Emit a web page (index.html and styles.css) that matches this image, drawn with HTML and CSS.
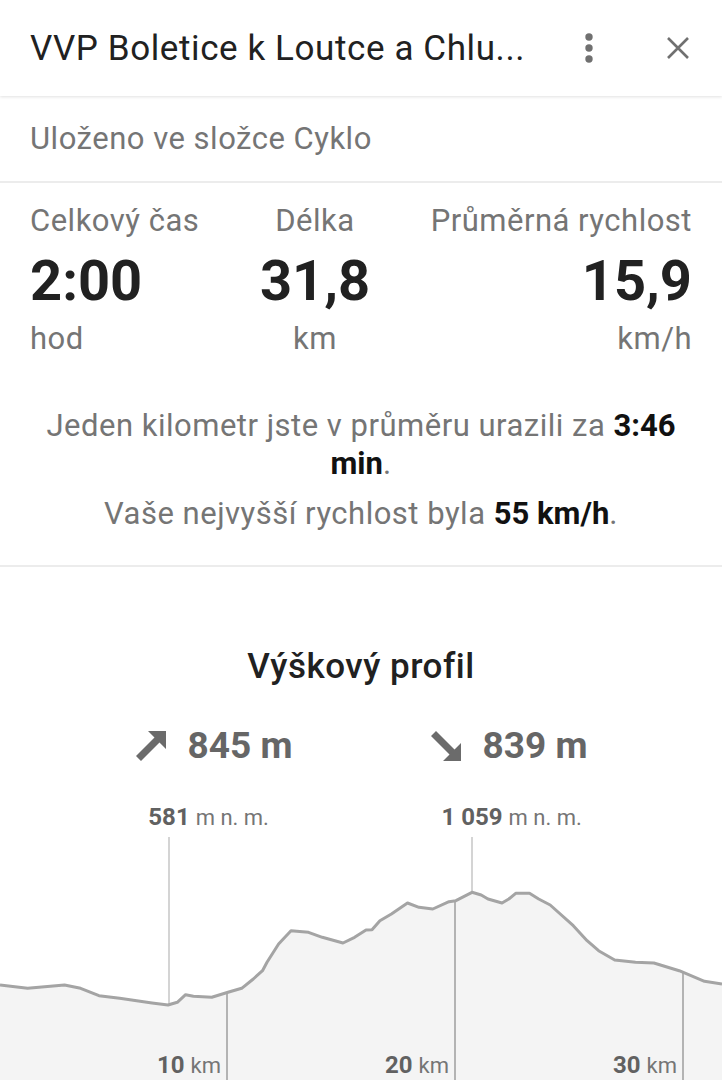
FILE: index.html
```html
<!DOCTYPE html>
<html lang="cs">
<head>
  <meta charset="UTF-8">
  <meta name="viewport" content="width=device-width, initial-scale=1.0">
  <title>VVP Boletice k Loutce a Chlumu</title>
  <link rel="stylesheet" href="styles.css">
</head>
<body>
  <!-- Top Bar -->
  <header class="topbar">
    <h1 class="topbar-title">VVP Boletice k Loutce a Chlu...</h1>
    <button class="icon-btn more-btn" aria-label="Více">
      <svg width="12" height="30" viewBox="0 0 12 30">
        <circle cx="6" cy="4" r="3.7"/>
        <circle cx="6" cy="15" r="3.7"/>
        <circle cx="6" cy="26" r="3.7"/>
      </svg>
    </button>
    <button class="icon-btn close-btn" aria-label="Zavřít">
      <svg width="24" height="24" viewBox="0 0 24 24">
        <path d="M2 2 L22 22 M22 2 L2 22"/>
      </svg>
    </button>
  </header>

  <!-- Folder -->
  <div class="folder">Uloženo ve složce Cyklo</div>

  <!-- Stats -->
  <section class="stats">
    <div class="stats-row">
      <div class="stat stat-left">
        <div class="stat-label">Celkový čas</div>
        <div class="stat-value">2:00</div>
        <div class="stat-unit">hod</div>
      </div>
      <div class="stat stat-center">
        <div class="stat-label">Délka</div>
        <div class="stat-value">31,8</div>
        <div class="stat-unit">km</div>
      </div>
      <div class="stat stat-right">
        <div class="stat-label">Průměrná rychlost</div>
        <div class="stat-value">15,9</div>
        <div class="stat-unit">km/h</div>
      </div>
    </div>
    <p class="summary summary-first">Jeden kilometr jste v průměru urazili za <b>3:46 min</b>.</p>
    <p class="summary">Vaše nejvyšší rychlost byla <b>55 km/h</b>.</p>
  </section>

  <!-- Elevation Profile -->
  <section class="profile">
    <h2 class="profile-title">Výškový profil</h2>
    <div class="gain">
      <div class="gain-item">
        <svg class="gain-icon" width="32" height="32" viewBox="0 0 32 32">
          <polygon points="13,1 31,1 31,19 24.5,12.5 6,31 1,26 19.5,7.5"/>
        </svg>
        <span>845 m</span>
      </div>
      <div class="gain-item">
        <svg class="gain-icon" width="32" height="32" viewBox="0 0 32 32">
          <polygon points="13,31 31,31 31,13 24.5,19.5 6,1 1,6 19.5,24.5"/>
        </svg>
        <span>839 m</span>
      </div>
    </div>

    <div class="chart">
      <svg class="chart-svg" width="722" height="300" viewBox="0 0 722 300">
        <path class="chart-area" d="M0,196 L27.6,199.3 L64.5,196 L80.6,199.3 L99,206.7 L119.7,209.3 L152,214 L168,216 L177.3,213.3 L185.6,205.7 L193.4,207.3 L211.8,208.3 L228,203.3 L241.7,199.3 L253.3,190 L262.5,181.7 L267,173.3 L278.6,155 L291,141.7 L308.5,143.3 L322.3,148.3 L343,154 L354.6,148.3 L366,141 L372,140.7 L379.9,131.7 L391.4,125 L407.5,114 L419,118.3 L432.8,120 L449,112.7 L455.9,111.7 L472,103.3 L481.2,106 L488,110 L502,114 L508.8,110 L515.7,104.3 L529.5,104.3 L538.7,110 L550.2,116 L573.3,136.7 L587.1,151.7 L598.6,161.7 L614.7,171 L635.5,173.3 L653.9,174 L679.2,181.7 L704.5,192.3 L722,195 L722,300 L0,300 Z"/>
        <line class="chart-mark" x1="169" y1="48" x2="169" y2="216"/>
        <line class="chart-mark" x1="472" y1="48" x2="472" y2="103"/>
        <line class="chart-tick" x1="227" y1="203" x2="227" y2="300"/>
        <line class="chart-tick" x1="455" y1="112" x2="455" y2="300"/>
        <line class="chart-tick" x1="683" y1="182" x2="683" y2="300"/>
        <polyline class="chart-line" points="0,196 27.6,199.3 64.5,196 80.6,199.3 99,206.7 119.7,209.3 152,214 168,216 177.3,213.3 185.6,205.7 193.4,207.3 211.8,208.3 228,203.3 241.7,199.3 253.3,190 262.5,181.7 267,173.3 278.6,155 291,141.7 308.5,143.3 322.3,148.3 343,154 354.6,148.3 366,141 372,140.7 379.9,131.7 391.4,125 407.5,114 419,118.3 432.8,120 449,112.7 455.9,111.7 472,103.3 481.2,106 488,110 502,114 508.8,110 515.7,104.3 529.5,104.3 538.7,110 550.2,116 573.3,136.7 587.1,151.7 598.6,161.7 614.7,171 635.5,173.3 653.9,174 679.2,181.7 704.5,192.3 722,195"/>
      </svg>

      <div class="elev" style="left: 169px">581<span class="elev-unit">m n. m.</span></div>
      <div class="elev" style="left: 472px">1 059<span class="elev-unit">m n. m.</span></div>

      <div class="km" style="right: 501px">10 <span>km</span></div>
      <div class="km" style="right: 273px">20 <span>km</span></div>
      <div class="km" style="right: 45px">30 <span>km</span></div>
    </div>
  </section>
</body>
</html>
```

FILE: styles.css
```css
/* General Styles */
:root {
  --text-main: #212121;
  --text-muted: #757575;
  --text-strong: #111111;
  --icon: #707070;
  --divider: #ececec;
  --chart-fill: #f4f4f4;
  --chart-line: #a4a4a4;
}

body {
  margin: 0;
  width: 722px;
  overflow: hidden;
  font-family: Roboto, 'Noto Sans', sans-serif;
  background: #ffffff;
  color: var(--text-main);
}

/* Top Bar */
.topbar {
  position: relative;
  z-index: 1;
  display: flex;
  align-items: center;
  height: 96px;
  padding: 0 24px 0 30px;
  background: #ffffff;
  box-shadow: 0 1px 3px rgba(0, 0, 0, 0.12);
}

.topbar-title {
  flex: 1;
  margin: 0;
  font-size: 35px;
  font-weight: 400;
  letter-spacing: 0.6px;
  white-space: nowrap;
  color: var(--text-main);
}

.icon-btn {
  display: flex;
  align-items: center;
  justify-content: center;
  width: 40px;
  height: 40px;
  padding: 0;
  border: none;
  background: none;
}

.more-btn svg {
  fill: var(--icon);
}

.close-btn {
  margin-left: 49px;
}

.close-btn svg {
  stroke: var(--icon);
  stroke-width: 2.6;
  fill: none;
}

/* Folder */
.folder {
  padding: 23px 30px 22px;
  font-size: 31px;
  letter-spacing: 0.5px;
  line-height: 40px;
  color: var(--text-muted);
  border-bottom: 2px solid var(--divider);
}

/* Stats */
.stats {
  padding: 19px 30px 32px;
  border-bottom: 2px solid var(--divider);
}

.stats-row {
  display: flex;
  justify-content: space-between;
}

.stat-center {
  text-align: center;
}

.stat-right {
  text-align: right;
}

.stat-label,
.stat-unit {
  font-size: 31px;
  letter-spacing: 0.5px;
  line-height: 38px;
  color: var(--text-muted);
}

.stat-value {
  margin-top: 9px;
  font-size: 56px;
  font-weight: 700;
  line-height: 64px;
  color: var(--text-main);
}

.stat-unit {
  margin-top: 7px;
}

.summary {
  margin: 12px 0 0;
  text-align: center;
  font-size: 31px;
  letter-spacing: 0.5px;
  line-height: 38px;
  color: var(--text-muted);
}

.summary-first {
  margin-top: 49px;
}

.summary b {
  font-weight: 700;
  letter-spacing: 0;
  color: var(--text-strong);
}

/* Elevation Profile */
.profile {
  padding-top: 80px;
}

.profile-title {
  margin: 0;
  text-align: center;
  font-size: 35px;
  font-weight: 500;
  letter-spacing: 0.5px;
  line-height: 40px;
  color: var(--text-main);
}

.gain {
  display: flex;
  justify-content: center;
  gap: 137px;
  margin-top: 37px;
}

.gain-item {
  display: flex;
  align-items: center;
  gap: 21px;
  font-size: 37px;
  font-weight: 700;
  line-height: 44px;
  color: #666666;
}

.gain-icon {
  fill: #6b6b6b;
}

.chart {
  position: relative;
  height: 300px;
  margin-top: 21px;
}

.chart-svg {
  position: absolute;
  top: 0;
  left: 0;
}

.chart-area {
  fill: var(--chart-fill);
}

.chart-line {
  fill: none;
  stroke: var(--chart-line);
  stroke-width: 3;
  stroke-linejoin: round;
}

.chart-mark {
  stroke: #c6c6c6;
  stroke-width: 1.5;
}

.chart-tick {
  stroke: #9e9e9e;
  stroke-width: 1.5;
}

.elev {
  position: absolute;
  top: 14px;
  transform: translateX(-50%);
  font-size: 24px;
  font-weight: 700;
  line-height: 28px;
  white-space: nowrap;
  color: #616161;
}

.elev-unit {
  position: absolute;
  top: 1px;
  left: 100%;
  margin-left: 6px;
  font-size: 22px;
  font-weight: 400;
  color: var(--text-muted);
}

.km {
  position: absolute;
  top: 262px;
  font-size: 24px;
  font-weight: 700;
  line-height: 28px;
  white-space: nowrap;
  color: #616161;
}

.km span {
  font-size: 22px;
  font-weight: 400;
  color: var(--text-muted);
}
```
